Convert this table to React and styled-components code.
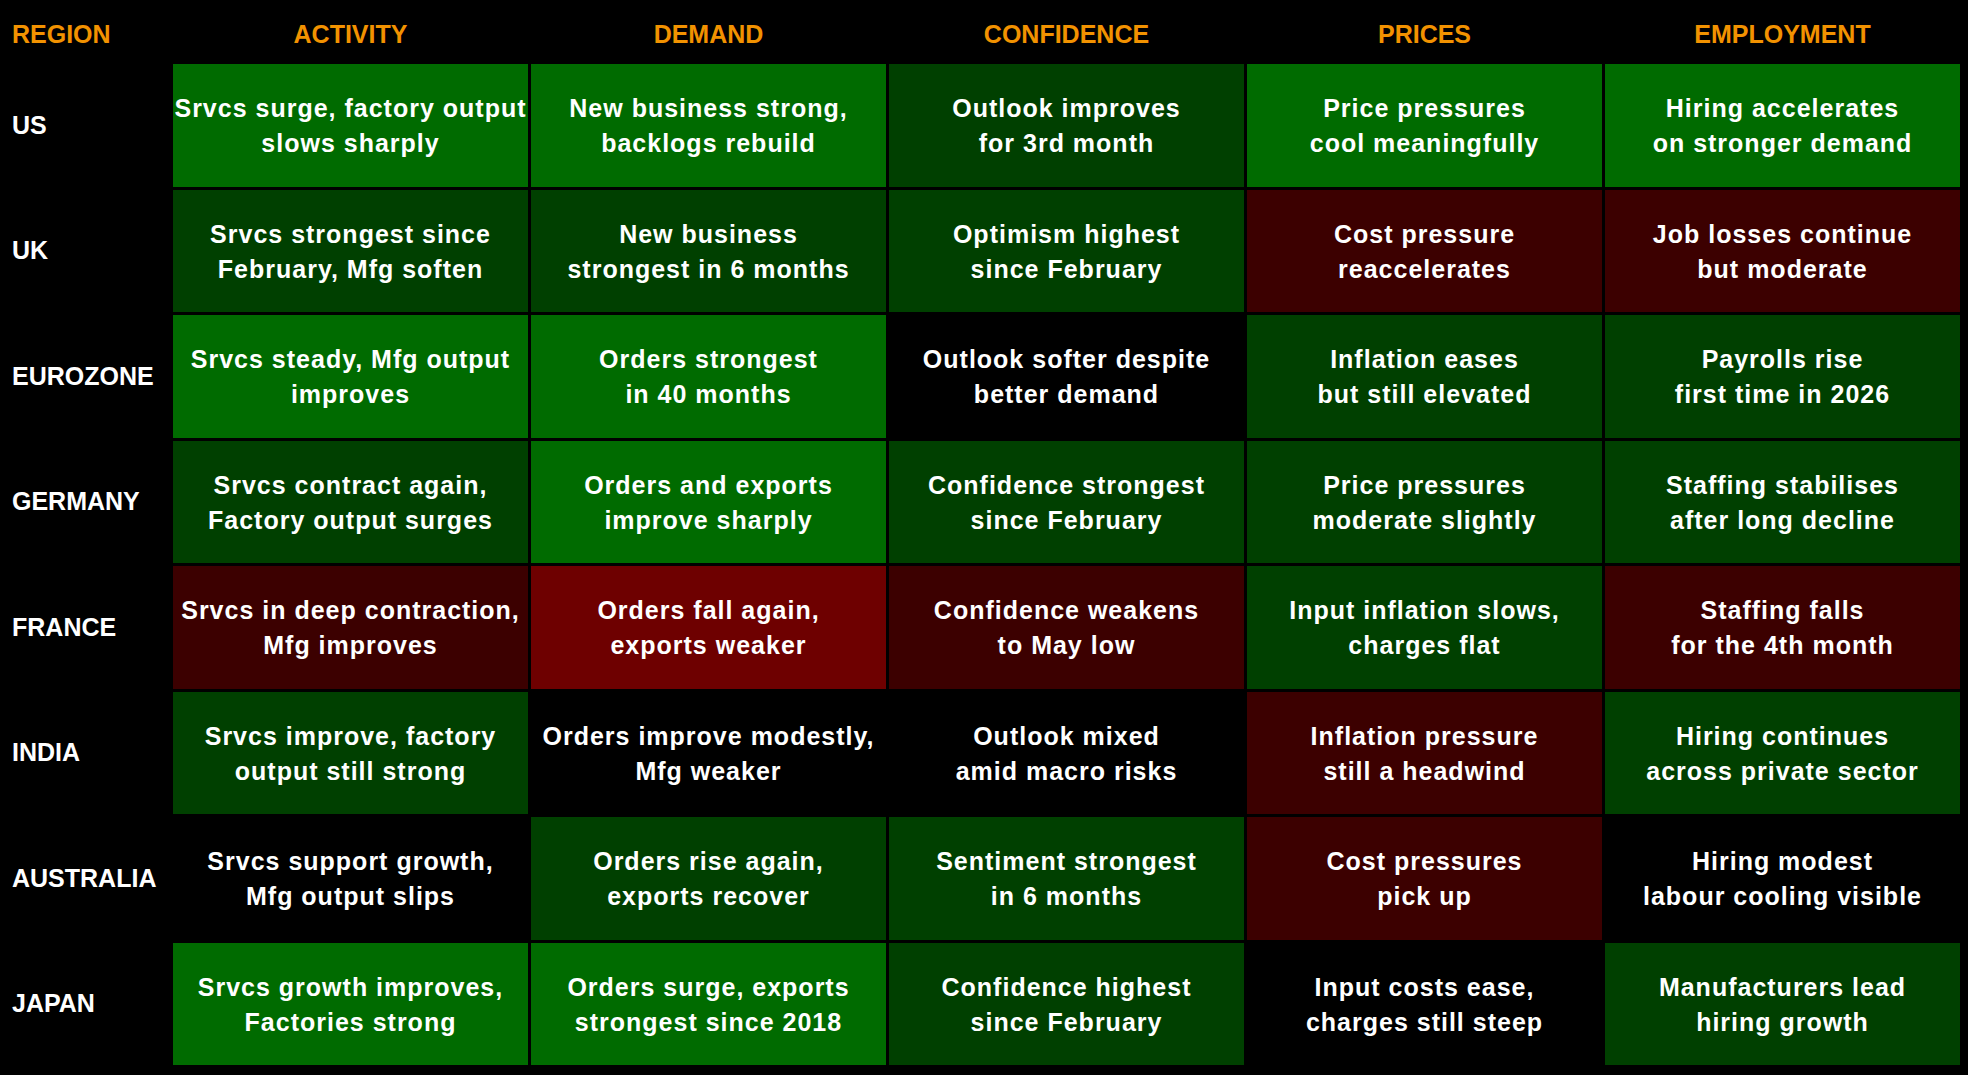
import React from "react";
import styled, { createGlobalStyle } from "styled-components";

const tones = {
  strong: "#006b00",
  good: "#004000",
  flat: "#000000",
  weak: "#3c0000",
  bad: "#6e0000",
};

const columns = ["ACTIVITY", "DEMAND", "CONFIDENCE", "PRICES", "EMPLOYMENT"];

const rows = [
  {
    region: "US",
    cells: [
      ["strong", "Srvcs surge, factory output", "slows sharply"],
      ["strong", "New business strong,", "backlogs rebuild"],
      ["good", "Outlook improves", "for 3rd month"],
      ["strong", "Price pressures", "cool meaningfully"],
      ["strong", "Hiring accelerates", "on stronger demand"],
    ],
  },
  {
    region: "UK",
    cells: [
      ["good", "Srvcs strongest since", "February, Mfg soften"],
      ["good", "New business", "strongest in 6 months"],
      ["good", "Optimism highest", "since February"],
      ["weak", "Cost pressure", "reaccelerates"],
      ["weak", "Job losses continue", "but moderate"],
    ],
  },
  {
    region: "EUROZONE",
    cells: [
      ["strong", "Srvcs steady, Mfg output", "improves"],
      ["strong", "Orders strongest", "in 40 months"],
      ["flat", "Outlook softer despite", "better demand"],
      ["good", "Inflation eases", "but still elevated"],
      ["good", "Payrolls rise", "first time in 2026"],
    ],
  },
  {
    region: "GERMANY",
    cells: [
      ["good", "Srvcs contract again,", "Factory output surges"],
      ["strong", "Orders and exports", "improve sharply"],
      ["good", "Confidence strongest", "since February"],
      ["good", "Price pressures", "moderate slightly"],
      ["good", "Staffing stabilises", "after long decline"],
    ],
  },
  {
    region: "FRANCE",
    cells: [
      ["weak", "Srvcs in deep contraction,", "Mfg improves"],
      ["bad", "Orders fall again,", "exports weaker"],
      ["weak", "Confidence weakens", "to May low"],
      ["good", "Input inflation slows,", "charges flat"],
      ["weak", "Staffing falls", "for the 4th month"],
    ],
  },
  {
    region: "INDIA",
    cells: [
      ["good", "Srvcs improve, factory", "output still strong"],
      ["flat", "Orders improve modestly,", "Mfg weaker"],
      ["flat", "Outlook mixed", "amid macro risks"],
      ["weak", "Inflation pressure", "still a headwind"],
      ["good", "Hiring continues", "across private sector"],
    ],
  },
  {
    region: "AUSTRALIA",
    cells: [
      ["flat", "Srvcs support growth,", "Mfg output slips"],
      ["good", "Orders rise again,", "exports recover"],
      ["good", "Sentiment strongest", "in 6 months"],
      ["weak", "Cost pressures", "pick up"],
      ["flat", "Hiring modest", "labour cooling visible"],
    ],
  },
  {
    region: "JAPAN",
    cells: [
      ["strong", "Srvcs growth improves,", "Factories strong"],
      ["strong", "Orders surge, exports", "strongest since 2018"],
      ["good", "Confidence highest", "since February"],
      ["flat", "Input costs ease,", "charges still steep"],
      ["good", "Manufacturers lead", "hiring growth"],
    ],
  },
];

const GlobalStyle = createGlobalStyle`
  html, body {
    margin: 0;
    padding: 0;
    background: #000;
  }
  body {
    font-family: "Liberation Sans", Arial, sans-serif;
  }
`;

const Page = styled.div`
  width: 1968px;
  height: 1075px;
  background: #000;
  overflow: hidden;
`;

const Table = styled.div`
  display: grid;
  grid-template-columns: 170px repeat(5, 355px);
  grid-template-rows: 61px repeat(8, 122.5px);
  column-gap: 3px;
  row-gap: 3px;
`;

const HeadCell = styled.div`
  display: flex;
  align-items: center;
  justify-content: ${(p) => (p.$left ? "flex-start" : "center")};
  padding: 8px 0 0 ${(p) => (p.$left ? "12px" : "0")};
  color: #f29200;
  font-size: 25px;
  font-weight: 700;
  white-space: nowrap;
`;

const RegionLabel = styled.div`
  display: flex;
  align-items: center;
  padding-left: 12px;
  color: #fff;
  font-size: 25px;
  font-weight: 700;
  white-space: nowrap;
`;

const Cell = styled.div`
  display: flex;
  flex-direction: column;
  align-items: center;
  justify-content: center;
  padding-top: 2px;
  background: ${(p) => tones[p.$tone]};
  color: #fff;
  font-size: 25px;
  font-weight: 700;
  letter-spacing: 1px;
  line-height: 35px;
  text-align: center;
`;

const Line = styled.span`
  white-space: nowrap;
`;

export default function App() {
  return (
    <Page>
      <GlobalStyle />
      <Table>
        <HeadCell $left>REGION</HeadCell>
        {columns.map((c) => (
          <HeadCell key={c}>{c}</HeadCell>
        ))}
        {rows.map((row) => (
          <React.Fragment key={row.region}>
            <RegionLabel>{row.region}</RegionLabel>
            {row.cells.map(([tone, a, b], i) => (
              <Cell key={i} $tone={tone}>
                <Line>{a}</Line>
                <Line>{b}</Line>
              </Cell>
            ))}
          </React.Fragment>
        ))}
      </Table>
    </Page>
  );
}
